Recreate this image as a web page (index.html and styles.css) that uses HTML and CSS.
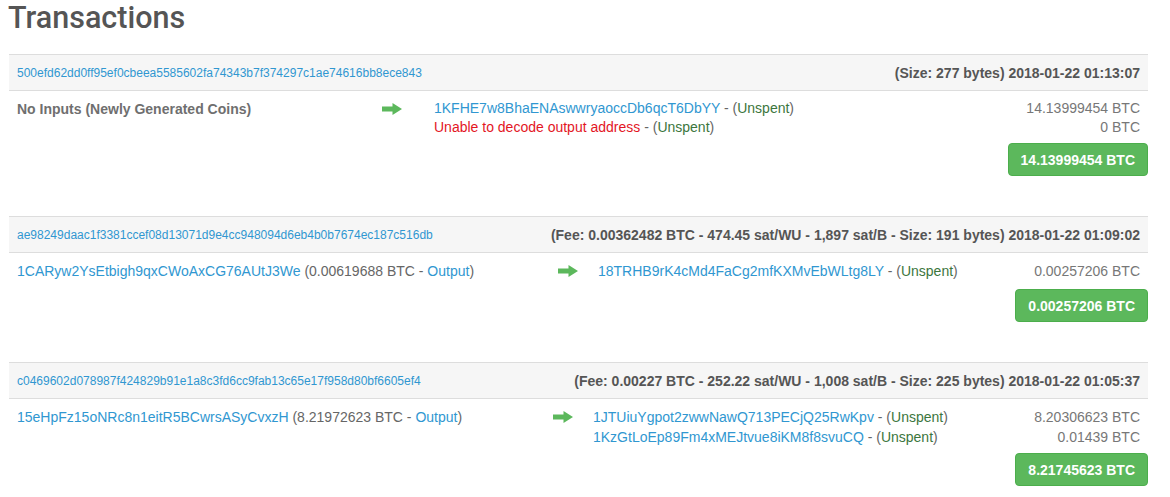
FILE: index.html
```html
<!DOCTYPE html>
<html>
<head>
<meta charset="utf-8">
<link rel="stylesheet" href="styles.css">
</head>
<body>
<div class="page">
  <h1 class="title">Transactions</h1>

  <div class="tx tx-1">
    <div class="tx-head">
      <a class="hash" href="#">500efd62dd0ff95ef0cbeea5585602fa74343b7f374297c1ae74616bb8ece843</a>
      <span class="meta">(Size: 277 bytes) 2018-01-22 01:13:07</span>
    </div>
    <div class="tx-row">
      <div class="cell inputs"><span class="coinbase">No Inputs (Newly Generated Coins)</span></div>
      <div class="cell arrow">
        <svg width="20" height="12" viewBox="0 0 20 12"><path d="M0 3.5H10.5V0L20 6L10.5 12V8.5H0Z" fill="#5cb85c"/></svg>
      </div>
      <div class="cell outputs">
        <div><a href="#">1KFHE7w8BhaENAswwryaoccDb6qcT6DbYY</a> - (<span class="unspent">Unspent</span>)</div>
        <div><span class="danger">Unable to decode output address</span> - (<span class="unspent">Unspent</span>)</div>
      </div>
      <div class="cell amounts">
        <div>14.13999454 BTC</div>
        <div>0 BTC</div>
      </div>
    </div>
    <div class="total"><span class="btn-total">14.13999454 BTC</span></div>
  </div>

  <div class="tx tx-2">
    <div class="tx-head">
      <a class="hash" href="#">ae98249daac1f3381ccef08d13071d9e4cc948094d6eb4b0b7674ec187c516db</a>
      <span class="meta">(Fee: 0.00362482 BTC - 474.45 sat/WU - 1,897 sat/B - Size: 191 bytes) 2018-01-22 01:09:02</span>
    </div>
    <div class="tx-row">
      <div class="cell inputs"><a href="#">1CARyw2YsEtbigh9qxCWoAxCG76AUtJ3We</a> (0.00619688 BTC - <a href="#">Output</a>)</div>
      <div class="cell arrow">
        <svg width="20" height="12" viewBox="0 0 20 12"><path d="M0 3.5H10.5V0L20 6L10.5 12V8.5H0Z" fill="#5cb85c"/></svg>
      </div>
      <div class="cell outputs">
        <div><a href="#">18TRHB9rK4cMd4FaCg2mfKXMvEbWLtg8LY</a> - (<span class="unspent">Unspent</span>)</div>
      </div>
      <div class="cell amounts">
        <div>0.00257206 BTC</div>
      </div>
    </div>
    <div class="total"><span class="btn-total">0.00257206 BTC</span></div>
  </div>

  <div class="tx tx-3">
    <div class="tx-head">
      <a class="hash" href="#">c0469602d078987f424829b91e1a8c3fd6cc9fab13c65e17f958d80bf6605ef4</a>
      <span class="meta">(Fee: 0.00227 BTC - 252.22 sat/WU - 1,008 sat/B - Size: 225 bytes) 2018-01-22 01:05:37</span>
    </div>
    <div class="tx-row">
      <div class="cell inputs"><a href="#">15eHpFz15oNRc8n1eitR5BCwrsASyCvxzH</a> (8.21972623 BTC - <a href="#">Output</a>)</div>
      <div class="cell arrow">
        <svg width="20" height="12" viewBox="0 0 20 12"><path d="M0 3.5H10.5V0L20 6L10.5 12V8.5H0Z" fill="#5cb85c"/></svg>
      </div>
      <div class="cell outputs">
        <div><a href="#">1JTUiuYgpot2zwwNawQ713PECjQ25RwKpv</a> - (<span class="unspent">Unspent</span>)</div>
        <div><a href="#">1KzGtLoEp89Fm4xMEJtvue8iKM8f8svuCQ</a> - (<span class="unspent">Unspent</span>)</div>
      </div>
      <div class="cell amounts">
        <div>8.20306623 BTC</div>
        <div>0.01439 BTC</div>
      </div>
    </div>
    <div class="total"><span class="btn-total">8.21745623 BTC</span></div>
  </div>
</div>
</body>
</html>
```

FILE: styles.css
```css
html, body {
  margin: 0;
  padding: 0;
  background: #ffffff;
}

body {
  font-family: "Liberation Sans", Arial, Helvetica, sans-serif;
  font-size: 14px;
  line-height: 20px;
  color: #666666;
}

a {
  color: #3097d1;
  text-decoration: none;
}

.page {
  padding: 0 22px 0 9px;
}

.title {
  font-family: Roboto, "Liberation Sans", sans-serif;
  font-weight: 500;
  font-size: 30.5px;
  line-height: 40px;
  color: #555555;
  margin: -2px 0 16px -1px;
}

.tx {
  margin-bottom: 40px;
}

.tx-head {
  display: flex;
  justify-content: space-between;
  align-items: center;
  background: #f6f6f6;
  border-top: 1px solid #dddddd;
  border-bottom: 1px solid #dddddd;
  padding: 8px;
  height: 19px;
}

.hash {
  font-size: 12px;
}

.meta {
  font-weight: bold;
  color: #555555;
}

.tx-row {
  display: flex;
  align-items: flex-start;
}

.cell {
  padding: 8px;
}

.tx-1 .inputs { width: 349px; }
.tx-2 .inputs { width: 525px; }
.tx-3 .inputs { width: 520px; }

.tx-1 .arrow { width: 36px; }
.tx-2 .arrow, .tx-3 .arrow { width: 24px; }

.arrow svg {
  display: block;
  margin-top: 4px;
}

.coinbase {
  font-weight: bold;
  color: #6f6f6f;
}

.outputs {
  flex: 1;
}

.amounts {
  text-align: right;
  color: #777777;
}

.tx-1 .outputs, .tx-1 .amounts {
  line-height: 19px;
}

.unspent {
  color: #3c763d;
}

.danger {
  color: #e3161f;
}

.total {
  display: flex;
  justify-content: flex-end;
  margin-top: -2px;
}

.tx-2 .total {
  margin-top: 0;
}

.btn-total {
  display: inline-block;
  background: #5cb85c;
  border: 1px solid #4cae4c;
  border-radius: 4px;
  color: #ffffff;
  font-weight: bold;
  padding: 6px 12px 5px;
  line-height: 20px;
}
```
